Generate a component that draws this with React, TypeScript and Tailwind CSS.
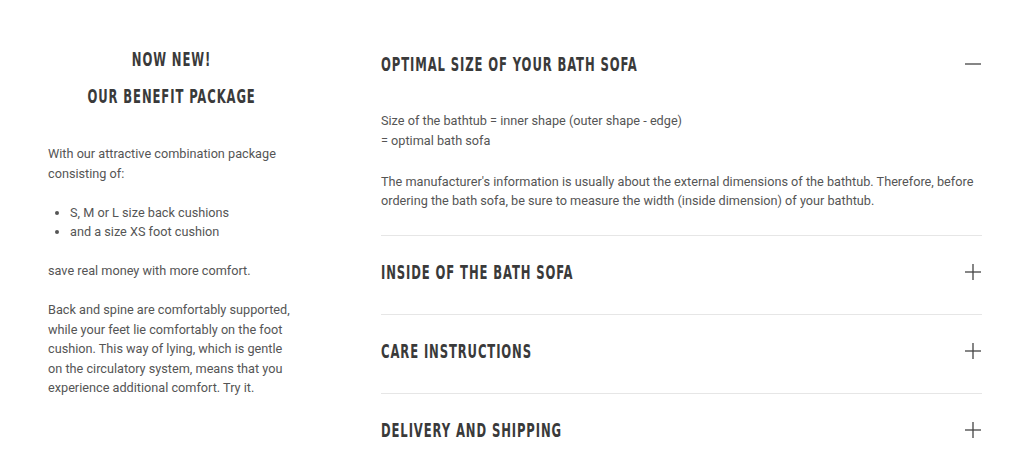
import React from 'react'

const headingFont = "font-['DejaVu_Sans_Condensed','DejaVu_Sans',sans-serif] font-stretch-condensed font-bold uppercase"

interface Section {
  title: string
  open: boolean
}

const sections: Section[] = [
  { title: 'Optimal size of your bath sofa', open: true },
  { title: 'Inside of the bath sofa', open: false },
  { title: 'Care instructions', open: false },
  { title: 'Delivery and shipping', open: false },
]

function PlusIcon({ open }: { open: boolean }) {
  return (
    <svg width="18" height="18" viewBox="0 0 18 18" className="text-[#444]">
      <line x1="1" y1="9" x2="17" y2="9" stroke="currentColor" strokeWidth="1.3" />
      {!open && <line x1="9" y1="1" x2="9" y2="17" stroke="currentColor" strokeWidth="1.3" />}
    </svg>
  )
}

function AccordionRow({ section, last }: { section: Section; last: boolean }) {
  return (
    <div className={last ? '' : 'border-b border-[#e6e6e6]'}>
      <div className="flex items-center justify-between pt-[25px] pb-[31px]">
        <h3
          className={`${headingFont} origin-left scale-x-[0.68] whitespace-nowrap text-[19px] leading-[22px] tracking-[1.3px] text-[#3a3a3a]`}
        >
          {section.title}
        </h3>
        <PlusIcon open={section.open} />
      </div>
      {section.open && (
        <div className="pb-[24px] pt-[5px] text-[12.7px] leading-[19.5px] text-[#555]">
          <p>
            Size of the bathtub = inner shape (outer shape - edge)
            <br />= optimal bath sofa
          </p>
          <p className="mt-[21.5px]">
            The manufacturer's information is usually about the external dimensions of the bathtub. Therefore, before
            ordering the bath sofa, be sure to measure the width (inside dimension) of your bathtub.
          </p>
        </div>
      )}
    </div>
  )
}

export default function App() {
  return (
    <div className="w-[1024px] h-[456px] overflow-hidden bg-white font-['Roboto',sans-serif] flex">
      <div className="ml-[48px] w-[247px] pt-[41px]">
        <div
          className={`${headingFont} scale-x-[0.68] whitespace-nowrap text-center text-[19px] leading-[37px] tracking-[1.3px] text-[#3a3a3a]`}
        >
          <div>Now new!</div>
          <div>Our benefit package</div>
        </div>
        <div className="mt-[29px] text-[12.7px] leading-[19.5px] text-[#555]">
          <p>With our attractive combination package consisting of:</p>
          <ul className="mt-[19.5px] list-disc pl-[22px]">
            <li>S, M or L size back cushions</li>
            <li>and a size XS foot cushion</li>
          </ul>
          <p className="mt-[19.5px]">save real money with more comfort.</p>
          <p className="mt-[19.5px]">
            Back and spine are comfortably supported, while your feet lie comfortably on the foot cushion. This way of
            lying, which is gentle on the circulatory system, means that you experience additional comfort. Try it.
          </p>
        </div>
      </div>
      <div className="ml-[86px] w-[601px] pt-[28px]">
        {sections.map((s, i) => (
          <AccordionRow key={s.title} section={s} last={i === sections.length - 1} />
        ))}
      </div>
    </div>
  )
}
